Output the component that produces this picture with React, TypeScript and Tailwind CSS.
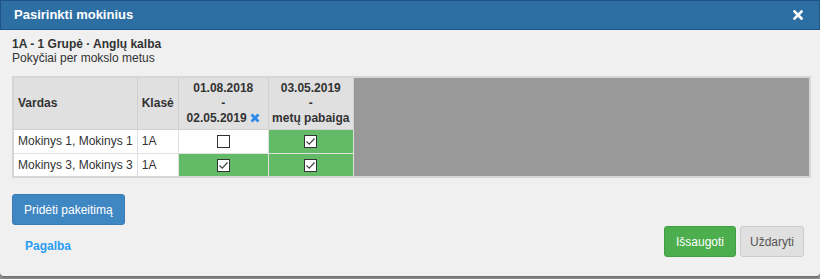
import React from 'react';

function Box({ checked }: { checked: boolean }) {
  return (
    <span className="inline-flex h-[13px] w-[13px] items-center justify-center border border-[#333] bg-white align-middle">
      {checked && (
        <svg width="11" height="11" viewBox="0 0 11 11">
          <path d="M1.5 5.5 L4.2 8.2 L9.5 2.5" fill="none" stroke="#444" strokeWidth="1.2" />
        </svg>
      )}
    </span>
  );
}

const rows = [
  { name: 'Mokinys 1, Mokinys 1', klase: '1A', a: false, b: true },
  { name: 'Mokinys 3, Mokinys 3', klase: '1A', a: true, b: true },
];

export default function App() {
  return (
    <div className="h-[279px] w-[820px] overflow-hidden bg-[#9a9a9a] font-['Liberation_Sans',Arial,sans-serif] text-[12px] text-[#333]">
      <div className="flex h-[276px] flex-col rounded-b-[4px] bg-[#f0f0f0] shadow-[0_2px_3px_rgba(0,0,0,0.3)]">
        {/* header */}
        <div className="flex h-[30px] items-center justify-between border border-[#1d5385] bg-[#2d6ea3] pl-[13px] pr-[13px] text-white">
          <span className="text-[13px] font-bold">Pasirinkti mokinius</span>
          <svg width="10" height="10" viewBox="0 0 10 10" className="mr-[3px]">
            <path d="M1.5 1.5 L8.5 8.5 M8.5 1.5 L1.5 8.5" stroke="#fff" strokeWidth="2.6" strokeLinecap="square" />
          </svg>
        </div>

        <div className="flex flex-1 flex-col px-[12px] pt-[7px]">
          <div className="font-bold leading-[14px]">1A - 1 Grupė · Anglų kalba</div>
          <div className="leading-[14px]">Pokyčiai per mokslo metus</div>

          <table className="mt-[11px] w-[799px] border-collapse border-2 border-[#d6d6d6]">
            <tbody>
              <tr className="h-[52px] bg-[#e0e0e0] font-bold">
                <th className="w-[122px] border border-[#d0d0d0] px-[4px] text-left">Vardas</th>
                <th className="w-[41px] border border-[#d0d0d0] px-[4px] text-left">Klasė</th>
                <th className="w-[90px] border border-[#d0d0d0] px-[2px] text-center leading-[15px]">
                  01.08.2018
                  <br />-<br />
                  02.05.2019{' '}
                  <svg width="10" height="10" viewBox="0 0 10 10" className="inline align-[-1px]">
                    <path d="M1.5 1.5 L8.5 8.5 M8.5 1.5 L1.5 8.5" stroke="#2d8ae8" strokeWidth="2.8" />
                  </svg>
                </th>
                <th className="w-[85px] border border-[#d0d0d0] px-[2px] text-center leading-[15px]">
                  03.05.2019
                  <br />-<br />
                  metų pabaiga
                </th>
                <td rowSpan={3} className="border-0 bg-[#999]"></td>
              </tr>
              {rows.map((r) => (
                <tr key={r.name} className="h-[24px]">
                  <td className="border border-[#e0e0e0] bg-white px-[4px] whitespace-nowrap">{r.name}</td>
                  <td className="border border-[#e0e0e0] bg-white px-[4px]">{r.klase}</td>
                  <td className={`border border-[#e0e0e0] text-center ${r.a ? 'bg-[#64bb67]' : 'bg-white'}`}>
                    <Box checked={r.a} />
                  </td>
                  <td className={`border border-[#e0e0e0] text-center ${r.b ? 'bg-[#64bb67]' : 'bg-white'}`}>
                    <Box checked={r.b} />
                  </td>
                </tr>
              ))}
            </tbody>
          </table>

          <div className="mt-[16px]">
            <button className="h-[31px] rounded-[3px] border border-[#3a7ab3] bg-[#3f87c3] px-[11px] text-[12px] text-white">
              Pridėti pakeitimą
            </button>
          </div>

          <div className="mt-[1px] flex items-end justify-between">
            <a className="mb-[2px] ml-[13px] text-[12px] font-bold text-[#2a9df4]">Pagalba</a>
            <div className="mr-[4px] flex gap-[4px]">
              <button className="h-[31px] rounded-[3px] border border-[#449d44] bg-[#4cae4c] px-[11px] text-[12px] text-white">
                Išsaugoti
              </button>
              <button className="h-[31px] rounded-[3px] border border-[#ccc] bg-[#e0e0e0] px-[9px] text-[12px] text-[#555]">
                Uždaryti
              </button>
            </div>
          </div>
        </div>
      </div>
    </div>
  );
}
